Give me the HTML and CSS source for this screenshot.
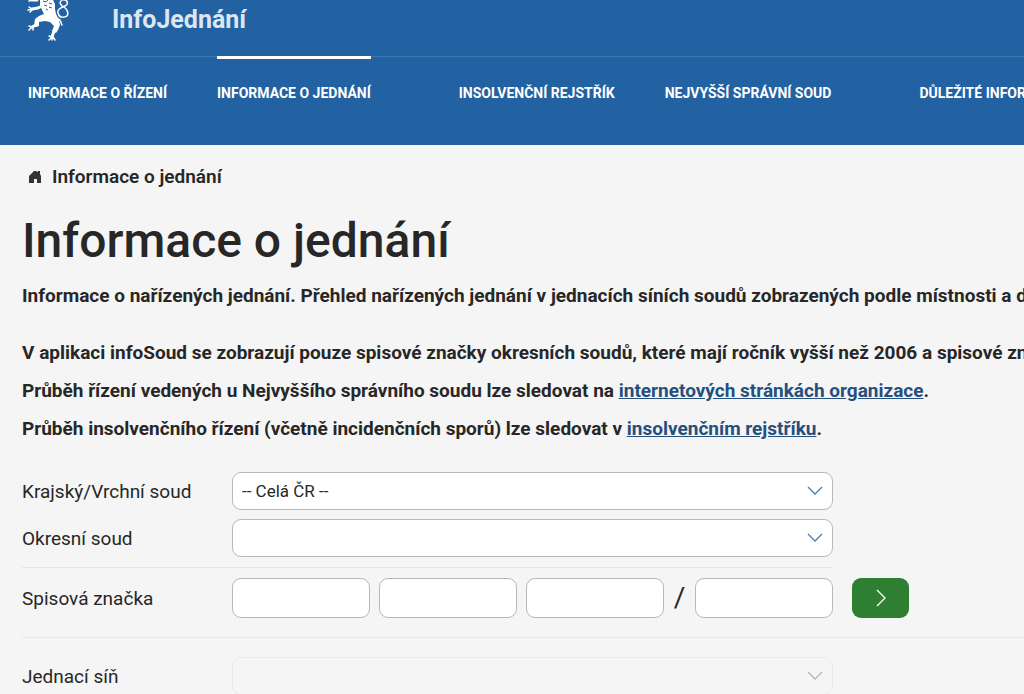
FILE: index.html
```
<!DOCTYPE html>
<html lang="cs">
<head>
    <meta charset="UTF-8">
    <meta name="viewport" content="width=device-width, initial-scale=1.0">
    <title>InfoJednání</title>
    <link rel="stylesheet" href="styles.css">
</head>
<body>
    <header class="header">
        <div class="brand">
            <svg class="logo" viewBox="0 0 46 42" aria-hidden="true">
                <path fill="#fff" d="M13 0h13l2 4 0 5 1 5 3 6 1 5-2 5-2 3-4-2 2-5-4-4-5-1-6 1 0 4-3 1-2-1 1-7 4-3 5-2-2-4-2-5z"/>
                <g fill="none" stroke="#fff" stroke-linecap="round" stroke-linejoin="round">
                    <path stroke-width="3" d="M15 6l-4 2-6 1M9 25l-4 2M27 31l-2 6M10 0L5 0"/>
                    <path stroke-width="1.500" d="M5 9L2 7M5 9l-4 1M5 10l-2 2M5 27l-3-1M5 27l-3 3M6 27l0 3M25 37l-3-1M25 37l-3 3M25 37l0 3M26 37l2 3M29 17l4 3 2 5M5 0L2 1"/>
                    <path stroke-width="1.500" d="M35 0c6-1 7 4 3 6-4 2-8 3-7 7 1 5 6 5 9 3 2-3 0-7-3-9-3-1-5-4-3-6"/>
                </g>
                <path fill="none" stroke="#2362a2" stroke-width="1" d="M16 1l3 1 2-2M22 3l3 1M17 5l3 1M22 7l3 1M19 9l2 1"/>
            </svg>
            <span class="brand-name">InfoJednání</span>
        </div>
        <nav class="menu">
            <div class="menu-group">
                <a href="#">INFORMACE O ŘÍZENÍ</a>
                <a href="#" class="active">INFORMACE O JEDNÁNÍ</a>
            </div>
            <div class="menu-group">
                <a href="#">INSOLVENČNÍ REJSTŘÍK</a>
                <a href="#">NEJVYŠŠÍ SPRÁVNÍ SOUD</a>
            </div>
            <div class="menu-group">
                <a href="#">DŮLEŽITÉ INFORMACE</a>
            </div>
        </nav>
    </header>

    <main class="content">
        <div class="breadcrumb">
            <a href="#" aria-label="Úvod">
                <svg width="14" height="14" viewBox="0 0 14 14"><path fill="#333" d="M6 1h2l2 1V1h2v3l1 2v7H9V9H6v4H1V6z"/></svg>
            </a>
            <span>Informace o jednání</span>
        </div>

        <h1>Informace o jednání</h1>
        <p class="lead">Informace o nařízených jednání. Přehled nařízených jednání v jednacích síních soudů zobrazených podle místnosti a dne.</p>
        <p>V aplikaci infoSoud se zobrazují pouze spisové značky okresních soudů, které mají ročník vyšší než 2006 a spisové značky krajských soudů.</p>
        <p>Průběh řízení vedených u Nejvyššího správního soudu lze sledovat na <a href="#">internetových stránkách organizace</a>.</p>
        <p>Průběh insolvenčního řízení (včetně incidenčních sporů) lze sledovat v <a href="#">insolvenčním rejstříku</a>.</p>

        <form class="form">
            <div class="courts">
                <div class="row">
                    <label for="kraj">Krajský/Vrchní soud</label>
                    <div class="select">
                        <select id="kraj"><option>-- Celá ČR --</option></select>
                        <svg viewBox="0 0 16 10"><path d="M1 1l7 7 7-7"/></svg>
                    </div>
                </div>
                <div class="row">
                    <label for="okres">Okresní soud</label>
                    <div class="select">
                        <select id="okres"><option></option></select>
                        <svg viewBox="0 0 16 10"><path d="M1 1l7 7 7-7"/></svg>
                    </div>
                </div>
            </div>

            <div class="row file-row">
                <label for="senat">Spisová značka</label>
                <div class="file-number">
                    <input type="text" id="senat">
                    <input type="text" aria-label="Druh věci">
                    <input type="text" aria-label="Číslo">
                    <span class="slash">/</span>
                    <input type="text" aria-label="Ročník">
                </div>
                <button type="submit" class="submit" aria-label="Vyhledat">
                    <svg width="10" height="18" viewBox="0 0 10 18"><path d="M1 1l8 8-8 8"/></svg>
                </button>
            </div>

            <div class="row">
                <label for="sin">Jednací síň</label>
                <div class="select disabled">
                    <select id="sin" disabled><option></option></select>
                    <svg viewBox="0 0 16 10"><path d="M1 1l7 7 7-7"/></svg>
                </div>
            </div>
        </form>
    </main>
</body>
</html>
```
FILE: styles.css
```
* {
    box-sizing: border-box;
}
html {
    overflow: hidden;
}
body {
    margin: 0;
    font-family: Roboto, "Liberation Sans", sans-serif;
    font-size: 19px;
    color: #272727;
    background: #f5f5f5;
}
.header {
    background: #2362a2;
    color: #fff;
}
.brand {
    display: flex;
    align-items: flex-start;
    gap: 39px;
    height: 56px;
    padding-left: 27px;
}
.logo {
    width: 46px;
    height: 42px;
}
.brand-name {
    font-size: 25px;
    font-weight: 700;
    line-height: 40px;
    color: #dce6f3;
}
.menu {
    display: flex;
    gap: 88px;
    height: 89px;
    padding-left: 28px;
    border-top: 1px solid #3a77b5;
}
.menu-group {
    display: flex;
    gap: 50px;
}
.menu a {
    margin-top: -1px;
    border-top: 3px solid transparent;
    font-size: 14px;
    font-weight: 700;
    line-height: 68px;
    color: #fff;
    text-decoration: none;
    white-space: nowrap;
}
.menu a.active {
    border-top-color: #fff;
}
.content {
    padding: 20px 0 0 22px;
}
.breadcrumb {
    display: flex;
    align-items: center;
    gap: 10px;
    padding-left: 6px;
    font-weight: 600;
    line-height: 24px;
}
.breadcrumb a {
    display: flex;
}
h1 {
    margin: 22px 0 13px;
    font-size: 48px;
    font-weight: 500;
    line-height: 60px;
}
p {
    margin: 0 0 14px;
    font-weight: 700;
    line-height: 24px;
    white-space: nowrap;
}
.lead {
    margin-bottom: 33px;
}
p a {
    color: #254f7d;
}
.form {
    padding-top: 17px;
}
.courts {
    display: flex;
    flex-direction: column;
    gap: 9px;
    max-width: 811px;
    padding-bottom: 10px;
    border-bottom: 1px solid #e6e6e6;
}
.row {
    display: flex;
    align-items: center;
}
.row label {
    width: 210px;
}
.select {
    position: relative;
    width: 601px;
}
.select select {
    display: block;
    width: 100%;
    height: 38px;
    padding: 0 9px;
    border: 1px solid #b8b8b8;
    border-radius: 9px;
    background: #fff;
    font: 17px Roboto, "Liberation Sans", sans-serif;
    color: #272727;
    appearance: none;
}
.select svg {
    position: absolute;
    top: 14px;
    right: 10px;
    width: 16px;
    height: 10px;
    fill: none;
    stroke: #4f7dad;
    stroke-width: 1.3;
    pointer-events: none;
}
.select.disabled select {
    border-color: #e9e9e9;
    background: #f5f5f5;
    opacity: 1;
}
.select.disabled svg {
    stroke: #b5b5b5;
}
.file-row {
    margin-bottom: 19px;
    padding: 10px 0 19px;
    border-bottom: 1px solid #e6e6e6;
}
.file-number {
    display: flex;
    align-items: center;
    gap: 9px;
    width: 601px;
}
.file-number input {
    flex: 1;
    min-width: 0;
    height: 40px;
    padding: 0 10px;
    border: 1px solid #b8b8b8;
    border-radius: 9px;
    background: #fff;
    font: 17px Roboto, "Liberation Sans", sans-serif;
}
.slash {
    width: 13px;
    font-size: 28px;
    line-height: 40px;
    text-align: center;
}
.submit {
    display: flex;
    align-items: center;
    justify-content: center;
    width: 57px;
    height: 40px;
    margin-left: 19px;
    padding: 0;
    border: none;
    border-radius: 9px;
    background: #2f7f32;
    cursor: pointer;
}
.submit svg {
    fill: none;
    stroke: #fff;
    stroke-width: 1.3;
}
```
